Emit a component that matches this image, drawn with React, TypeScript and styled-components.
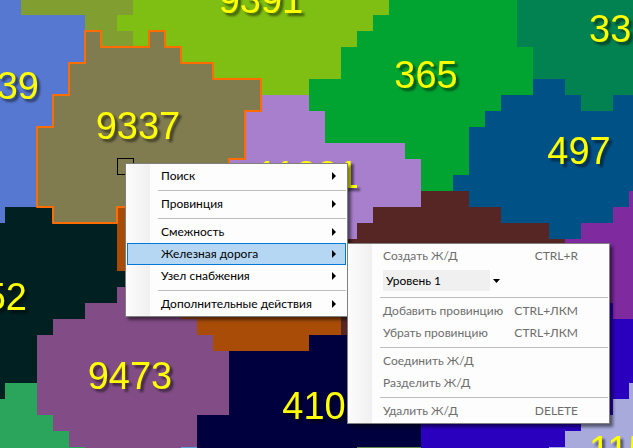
import React from "react";
import styled, { createGlobalStyle, css } from "styled-components";

const GlobalStyle = createGlobalStyle`
  * { box-sizing: border-box; }
  body { margin: 0; overflow: hidden; background: #00003e; }
`;

const Page = styled.main`
  position: relative;
  min-height: 100vh;
  overflow: hidden;
  font-family: Lato, "Noto Sans", sans-serif;
  font-size: 12px;
  line-height: 20px;
`;

const ProvinceMap = styled.svg`
  display: block;
  width: 100%;
  height: 100vh;
`;

const ProvinceLabel = styled.text`
  font-family: "Liberation Sans", Arial, sans-serif;
  font-size: 38px;
  fill: #ffff00;
  filter: drop-shadow(3px 3px 1px rgba(0, 0, 0, 0.5));
`;

const menuSurface = css`
  position: absolute;
  display: flex;
  flex-direction: column;
  margin: 0;
  padding: 1px;
  list-style: none;
  border: 1px solid #808080;
  background: linear-gradient(to right, #fcfcfc 0, #f8f8f8 8px, #f0f0f0 24px, #fdfdfd 24px);
  box-shadow: 3px 3px 3px rgba(0, 0, 0, 0.5);
`;

const MainMenu = styled.menu`
  ${menuSurface}
  left: 125px;
  top: 163px;
  width: 223px;
`;

const SubMenu = styled.menu`
  ${menuSurface}
  left: 347px;
  top: 243px;
  width: 263px;
`;

const MenuItem = styled.button<{ $active?: boolean }>`
  display: flex;
  align-items: center;
  justify-content: space-between;
  width: 100%;
  height: 22px;
  padding: 0 8px 0 33px;
  border: 1px solid ${(p) => (p.$active ? "#0078d7" : "transparent")};
  background: ${(p) => (p.$active ? "#b5d7f3" : "transparent")};
  color: #000;
  font: inherit;
  white-space: nowrap;

  &:disabled {
    padding-right: 29px;
    color: #6d6d6d;
  }
`;

const Separator = styled.li`
  height: 1px;
  margin: 3px 0 2px 31px;
  background: #bdbdbd;
`;

const LevelRow = styled.li`
  display: flex;
  height: 27px;
  padding: 3px 0 3px 34px;
`;

const LevelPicker = styled.label`
  display: grid;
  grid-template-columns: 107px 12px;
  align-items: center;
  height: 21px;
`;

const LevelSelect = styled.select`
  grid-area: 1 / 1 / 2 / 2;
  width: 100%;
  height: 21px;
  padding: 0 3px;
  border: 0;
  appearance: none;
  background: #f0f0f0;
  color: #000;
  font: inherit;
`;

const Glyph = styled.svg`
  display: block;
  flex: none;
  justify-self: center;
`;

type Region = { fill: string; points: string };

const regions: Region[] = [
  { fill: "#819e30", points: "21,0 133,0 133,47 85,47 85,15 21,15" },
  { fill: "#5678d0", points: "0,0 21,0 21,15 85,15 85,63 101,207 5,207 5,223 0,223" },
  { fill: "#7fbe13", points: "133,0 389,0 389,95 149,95 149,47 133,47 133,31 117,31 117,15 133,15" },
  { fill: "#a87fcd", points: "245,95 325,95 325,143 421,143 421,243 229,243 229,111 245,111" },
  {
    fill: "#02a431",
    points:
      "389,0 533,0 533,191 421,191 421,159 405,159 405,143 325,143 325,111 309,111 309,79 341,79 341,47 357,47 357,31 373,31 373,15 389,15",
  },
  { fill: "#552624", points: "421,191 565,191 565,351 341,351 341,239 357,239 357,223 373,223 373,207 421,207" },
  { fill: "#802aa0", points: "565,191 633,191 633,319 613,319 613,303 565,303" },
  {
    fill: "#005186",
    points:
      "533,79 633,79 633,191 629,191 629,207 613,207 613,223 581,223 581,239 549,239 549,223 501,223 501,207 469,207 469,191 453,191 453,175 469,175 469,127 485,127 485,111 501,111 501,95 533,95",
  },
  { fill: "#028250", points: "517,0 633,0 633,95 613,95 613,111 581,111 581,95 565,95 565,79 533,79 533,47 517,47" },
  { fill: "#002021", points: "5,207 125,207 125,351 37,351 37,383 5,383 5,399 0,399 0,223 5,223" },
  { fill: "#a84c08", points: "117,207 341,207 341,335 309,335 309,351 181,351 181,271 117,271" },
  { fill: "#00003e", points: "309,335 421,335 421,447 197,447 197,351 309,351" },
  { fill: "#2a00be", points: "421,303 613,303 613,319 633,319 633,448 421,448" },
  {
    fill: "#a8aadc",
    points: "629,383 633,383 633,448 549,448 549,447 565,447 565,431 581,431 581,415 613,415 613,399 629,399",
  },
  {
    fill: "#2ca55c",
    points: "0,399 5,399 5,383 37,383 37,415 53,415 53,431 69,431 69,447 85,447 85,448 0,448",
  },
  { fill: "#5fa0d8", points: "181,447 197,447 197,448 181,448" },
  { fill: "#5a8a50", points: "357,447 421,447 421,448 357,448" },
  {
    fill: "#824d86",
    points:
      "117,287 181,287 181,319 197,319 197,335 213,335 213,351 229,351 229,415 197,415 197,447 181,447 181,448 85,448 85,447 69,447 69,431 53,431 53,415 37,415 37,335 53,335 53,319 85,319 85,303 117,303",
  },
];

const selectedProvince =
  "85,31 101,31 101,47 149,47 149,31 165,31 165,47 181,47 181,63 213,63 213,79 261,79 261,111 245,111 245,159 229,159 229,207 117,207 117,223 53,223 53,207 37,207 37,127 53,127 53,95 69,95 69,63 85,63";

type Label = { text: string; x: number; y: number; anchor?: "start" | "middle" | "end" };

const labels: Label[] = [
  { text: "9391", x: 261, y: 13 },
  { text: "39", x: 39, y: 99, anchor: "end" },
  { text: "9337", x: 138, y: 139 },
  { text: "365", x: 426, y: 88 },
  { text: "33", x: 589, y: 42, anchor: "start" },
  { text: "497", x: 579, y: 164 },
  { text: "11221", x: 359, y: 188, anchor: "end" },
  { text: "52", x: 27, y: 310, anchor: "end" },
  { text: "9473", x: 130, y: 389 },
  { text: "410", x: 314, y: 419 },
  { text: "115", x: 589, y: 463, anchor: "start" },
];

function SubmenuArrow() {
  return (
    <Glyph width="5" height="8" viewBox="0 0 5 8" aria-hidden="true">
      <path d="M0 0 L4 4 L0 8 Z" fill="#000" />
    </Glyph>
  );
}

function Parent({ label, active }: { label: string; active?: boolean }) {
  return (
    <li>
      <MenuItem type="button" $active={active} aria-haspopup="menu" aria-expanded={!!active}>
        {label}
        <SubmenuArrow />
      </MenuItem>
    </li>
  );
}

function Command({ label, keys }: { label: string; keys?: string }) {
  return (
    <li>
      <MenuItem type="button" disabled>
        <span>{label}</span>
        {keys && <span>{keys}</span>}
      </MenuItem>
    </li>
  );
}

export default function App() {
  return (
    <Page>
      <GlobalStyle />
      <ProvinceMap viewBox="0 0 633 448" preserveAspectRatio="xMidYMid slice">
        <g shapeRendering="crispEdges">
          {regions.map((r) => (
            <polygon key={r.fill} fill={r.fill} points={r.points} />
          ))}
        </g>
        <polygon points={selectedProvince} fill="#807c50" stroke="#ff6c00" strokeWidth="2" strokeLinejoin="round" />
        {labels.map((l) => (
          <ProvinceLabel key={l.text} x={l.x} y={l.y} textAnchor={l.anchor ?? "middle"}>
            {l.text}
          </ProvinceLabel>
        ))}
        <rect x="117.5" y="158.5" width="16" height="16" fill="none" stroke="#000" />
      </ProvinceMap>

      <MainMenu>
        <Parent label="Поиск" />
        <Separator role="separator" />
        <Parent label="Провинция" />
        <Separator role="separator" />
        <Parent label="Смежность" />
        <Parent label="Железная дорога" active />
        <Parent label="Узел снабжения" />
        <Separator role="separator" />
        <Parent label="Дополнительные действия" />
      </MainMenu>

      <SubMenu>
        <Command label="Создать Ж/Д" keys="CTRL+R" />
        <LevelRow>
          <LevelPicker>
            <LevelSelect aria-label="Уровень">
              <option>Уровень 1</option>
            </LevelSelect>
            <Glyph width="7" height="4" viewBox="0 0 7 4" aria-hidden="true">
              <path d="M0 0 H7 L3.5 4 Z" fill="#000" />
            </Glyph>
          </LevelPicker>
        </LevelRow>
        <Separator role="separator" />
        <Command label="Добавить провинцию" keys="CTRL+ЛКМ" />
        <Command label="Убрать провинцию" keys="CTRL+ЛКМ" />
        <Separator role="separator" />
        <Command label="Соединить Ж/Д" />
        <Command label="Разделить Ж/Д" />
        <Separator role="separator" />
        <Command label="Удалить Ж/Д" keys="DELETE" />
      </SubMenu>
    </Page>
  );
}
